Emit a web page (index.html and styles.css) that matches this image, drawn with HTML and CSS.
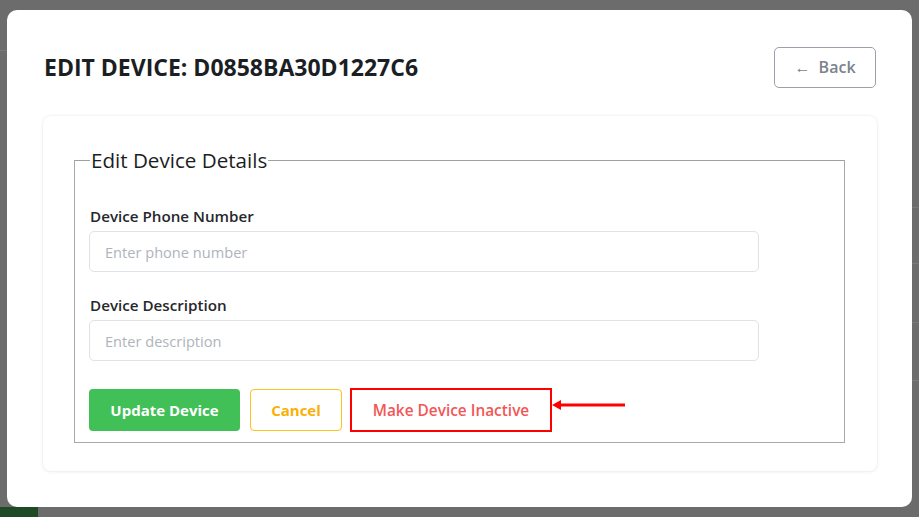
FILE: index.html
```html
<!DOCTYPE html>
<html lang="en">
<head>
<meta charset="utf-8">
<title>Edit Device</title>
<link rel="stylesheet" href="styles.css">
</head>
<body>
<div class="page-bg">
  <span class="bg-green"></span>
  <span class="bg-line l1"></span>
  <span class="bg-line l2"></span>
  <span class="bg-line l3"></span>
  <span class="bg-line l4"></span>
  <span class="bg-line l5"></span>
</div>
<div class="overlay">
  <div class="modal">
    <header class="modal-header">
      <h1 class="title">EDIT DEVICE: D0858BA30D1227C6</h1>
      <button class="btn-back" type="button"><span class="arrow">←</span> Back</button>
    </header>
    <section class="card">
      <fieldset class="fieldset">
        <legend class="legend">Edit Device Details</legend>
        <div class="field">
          <label class="label">Device Phone Number</label>
          <input class="input" type="text" placeholder="Enter phone number">
        </div>
        <div class="field">
          <label class="label">Device Description</label>
          <input class="input" type="text" placeholder="Enter description">
        </div>
        <div class="actions">
          <button class="btn btn-update" type="button">Update Device</button>
          <button class="btn btn-cancel" type="button">Cancel</button>
          <div class="inactive-wrap">
            <button class="btn btn-inactive" type="button">Make Device Inactive</button>
            <svg class="annot-arrow" width="74" height="12" viewBox="0 0 74 12">
              <line x1="6" y1="6" x2="73" y2="6" stroke="#ff0000" stroke-width="3"/>
              <polygon points="0,6 9,1 9,11" fill="#ff0000"/>
            </svg>
          </div>
        </div>
      </fieldset>
    </section>
  </div>
</div>
</body>
</html>
```
FILE: styles.css
```css
* { box-sizing: border-box; }
html, body { margin: 0; padding: 0; }
body {
  width: 919px;
  height: 517px;
  overflow: hidden;
  background: #6c6c6c;
  font-family: "Open Sans", "Noto Sans", sans-serif;
  color: #212529;
  position: relative;
}
.page-bg { position: absolute; inset: 0; }
.bg-green {
  position: absolute; left: 0; bottom: 0; width: 38px; height: 10px;
  background: #1f4a26;
}
.bg-line { position: absolute; height: 1px; background: #7a7a7a; }
.l1 { left: 0; width: 8px; top: 50px; }
.l2 { right: 0; width: 8px; top: 207px; }
.l3 { right: 0; width: 8px; top: 263px; }
.l4 { right: 0; width: 8px; top: 322px; }
.l5 { right: 0; width: 8px; top: 380px; }

.overlay {
  position: absolute; inset: 0;
  padding: 10px 7px;
}
.modal {
  width: 905px;
  height: 497px;
  background: #ffffff;
  border-radius: 10px;
  padding: 37px 36px 0 37px;
}
.modal-header {
  display: flex;
  align-items: center;
  justify-content: space-between;
  height: 40px;
}
.title {
  margin: 0;
  font-size: 23px;
  font-weight: 700;
  color: #1b1e23;
  letter-spacing: 0;
}
.btn-back {
  width: 102px;
  height: 41px;
  border: 1px solid #9aa1a8;
  border-radius: 5px;
  background: #fff;
  color: #7b838b;
  font-family: inherit;
  font-size: 16px;
  font-weight: 600;
  padding: 0;
}
.btn-back .arrow { font-weight: 400; margin-right: 4px; }

.card {
  margin-top: 29px;
  margin-left: -1px;
  width: 834px;
  height: 355px;
  background: #fff;
  border-radius: 8px;
  box-shadow: 0 0 3px rgba(0,0,0,0.08), 0 1px 4px rgba(0,0,0,0.05);
  padding: 30px 32px 28px 31px;
}
.fieldset {
  margin: 0;
  height: 297px;
  border: 1px solid #a8a8a8;
  border-top-color: #a0a0a0;
  padding: 0 85px 0 14px;
}
.legend {
  font-size: 20.6px;
  line-height: 28px;
  font-weight: 400;
  color: #1b1e23;
  padding: 0 1px;
  margin-left: 1px;
}
.field { display: flex; flex-direction: column; }
.field:first-of-type { margin-top: 31px; }
.field + .field { margin-top: 22px; }
.label {
  font-size: 15.2px;
  line-height: 22px;
  font-weight: 600;
  color: #25282c;
  margin-bottom: 4px;
  padding-left: 1px;
}
.input {
  height: 41px;
  width: 670px;
  border: 1px solid #dfe2e6;
  border-radius: 5px;
  padding: 0 15px;
  font-family: inherit;
  font-size: 14.6px;
  color: #495057;
}
.input::placeholder { color: #aeb4ba; }

.actions {
  margin-top: 27px;
  display: flex;
  align-items: center;
}
.btn {
  height: 42px;
  border-radius: 4px;
  font-family: inherit;
  font-size: 15px;
  font-weight: 700;
  padding: 0;
}
.btn-update {
  width: 151px;
  background: #40c057;
  border: none;
  color: #fff;
}
.btn-cancel {
  width: 92px;
  margin-left: 10px;
  background: #fff;
  border: 1px solid #fcc419;
  color: #fab005;
}
.inactive-wrap { position: relative; margin-left: 8px; }
.btn-inactive {
  width: 202px;
  height: 44px;
  border: 2px solid #ff0000;
  border-radius: 0;
  background: #fff;
  color: #f25757;
  font-size: 15.4px;
  font-weight: 600;
}
.annot-arrow {
  position: absolute;
  left: 202px;
  top: 11px;
}
```
